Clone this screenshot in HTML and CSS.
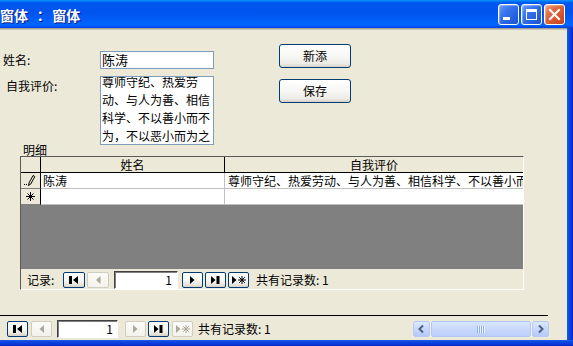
FILE: index.html
```html
<!DOCTYPE html>
<html lang="zh-CN">
<head>
<meta charset="utf-8">
<title>窗体 ： 窗体</title>
<link rel="stylesheet" href="styles.css">
</head>
<body>
<div class="window">
  <div class="titlebar">
    <span class="title">窗体 ： 窗体</span>
    <div class="tb-buttons">
      <span class="tb-btn"><svg width="19" height="19" viewBox="0 0 19 19"><rect x="4" y="12" width="7" height="3" fill="#fff"/></svg></span>
      <span class="tb-btn"><svg width="19" height="19" viewBox="0 0 19 19"><rect x="4.5" y="4.5" width="10" height="10" fill="none" stroke="#fff" stroke-width="1"/><rect x="4" y="4" width="11" height="3" fill="#fff"/></svg></span>
      <span class="tb-btn close"><svg width="19" height="19" viewBox="0 0 19 19"><path d="M5 5 L14 14 M14 5 L5 14" stroke="#fff" stroke-width="2" stroke-linecap="square"/></svg></span>
    </div>
  </div>
  <div class="frame">
    <div class="client">
      <div class="client-edge"></div>
      <div class="detail">
        <div class="top">
          <div class="fields">
            <div class="field-row">
              <span class="lbl lbl-name">姓名:</span>
              <div class="textbox">陈涛</div>
            </div>
            <div class="field-row row2">
              <span class="lbl lbl-eval">自我评价:</span>
              <div class="textarea"><div class="ta-text">尊师守纪、热爱劳动、与人为善、相信科学、不以善小而不为，不以恶小而为之</div></div>
            </div>
          </div>
          <div class="cmds">
            <button class="cmd">新添</button>
            <button class="cmd">保存</button>
          </div>
        </div>
        <div class="sub-label">明细</div>
        <div class="subform">
          <div class="dgrid">
            <div class="gh"></div>
            <div class="gh">姓名</div>
            <div class="gh last">自我评价</div>
            <div class="gsel"><svg width="19" height="15" viewBox="0 0 19 15"><rect x="3" y="11" width="1" height="1" fill="#000"/><rect x="5" y="11" width="1" height="1" fill="#000"/><path d="M7.5 12.5 L8 10 L12 2.5 L13.8 3.5 L9.8 11 Z" fill="none" stroke="#000" stroke-width="1"/></svg></div>
            <div class="gc">陈涛</div>
            <div class="gc last">尊师守纪、热爱劳动、与人为善、相信科学、不以善小而不为，不以恶小而为之</div>
            <div class="gsel"><svg width="19" height="15" viewBox="0 0 19 15"><path d="M9.5 3 V12 M5 7.5 H14 M6.5 4.5 L12.5 10.5 M12.5 4.5 L6.5 10.5" stroke="#000" stroke-width="1"/></svg></div>
            <div class="gc"></div>
            <div class="gc last"></div>
          </div>
          <div class="gray-area"></div>
          <div class="sub-nav">
            <span class="nav-label">记录:</span>
            <span class="nbtn w22"><svg width="20" height="14" viewBox="0 0 20 14"><rect x="5" y="3" width="3" height="8" fill="#000"/><path d="M14 3 L9 7 L14 11 Z" fill="#000"/></svg></span>
            <span class="nbtn w22 dis g2"><svg width="20" height="14" viewBox="0 0 20 14"><path d="M12.5 3 L8 7 L12.5 11 Z" fill="#ACA899"/></svg></span>
            <span class="navbox sub-box">1</span>
            <span class="nbtn g4"><svg width="19" height="14" viewBox="0 0 19 14"><path d="M7 3 L11.5 7 L7 11 Z" fill="#000"/></svg></span>
            <span class="nbtn g2"><svg width="19" height="14" viewBox="0 0 19 14"><path d="M5 3 L9.5 7 L5 11 Z" fill="#000"/><rect x="10.5" y="3" width="3" height="8" fill="#000"/></svg></span>
            <span class="nbtn g2"><svg width="19" height="14" viewBox="0 0 19 14"><path d="M3 3 L7.5 7 L3 11 Z" fill="#000"/><path d="M13 3 V11 M9 7 H17 M10.2 4.2 L15.8 9.8 M15.8 4.2 L10.2 9.8" stroke="#000" stroke-width="1"/></svg></span>
            <span class="nav-count sub-count">共有记录数: 1</span>
          </div>
        </div>
        <div class="detail-line"></div>
      </div>
      <div class="main-nav">
        <span class="nbtn"><svg width="19" height="14" viewBox="0 0 19 14"><rect x="5" y="3" width="3" height="8" fill="#000"/><path d="M14 3 L9 7 L14 11 Z" fill="#000"/></svg></span>
        <span class="nbtn dis g3"><svg width="19" height="14" viewBox="0 0 19 14"><path d="M12 3 L7.5 7 L12 11 Z" fill="#ACA899"/></svg></span>
        <span class="navbox main-box">1</span>
        <span class="nbtn dis g7"><svg width="19" height="14" viewBox="0 0 19 14"><path d="M7 3 L11.5 7 L7 11 Z" fill="#ACA899"/></svg></span>
        <span class="nbtn g2"><svg width="19" height="14" viewBox="0 0 19 14"><path d="M5 3 L9.5 7 L5 11 Z" fill="#000"/><rect x="10.5" y="3" width="3" height="8" fill="#000"/></svg></span>
        <span class="nbtn dis g3"><svg width="19" height="14" viewBox="0 0 19 14"><path d="M3 3 L7.5 7 L3 11 Z" fill="#ACA899"/><path d="M13 3 V11 M9 7 H17 M10.2 4.2 L15.8 9.8 M15.8 4.2 L10.2 9.8" stroke="#ACA899" stroke-width="1"/></svg></span>
        <span class="nav-count main-count">共有记录数: 1</span>
        <div class="hscroll">
          <span class="sb-btn"><svg width="15" height="14" viewBox="0 0 15 14"><path d="M9 3.5 L5.5 7 L9 10.5" fill="none" stroke="#4D6185" stroke-width="2"/></svg></span>
          <span class="sb-thumb"><svg width="9" height="7" viewBox="0 0 9 7"><path d="M0.5 0 V7 M2.5 0 V7 M4.5 0 V7 M6.5 0 V7" stroke="#8DAEF4" stroke-width="1"/><path d="M1.5 0 V7 M3.5 0 V7 M5.5 0 V7 M7.5 0 V7" stroke="#EEF4FF" stroke-width="1"/></svg></span>
          <span class="sb-btn"><svg width="15" height="14" viewBox="0 0 15 14"><path d="M6 3.5 L9.5 7 L6 10.5" fill="none" stroke="#4D6185" stroke-width="2"/></svg></span>
        </div>
      </div>
    </div>
    <div class="rborder"></div>
  </div>
  <div class="bborder"></div>
</div>
</body>
</html>
```

FILE: styles.css
```css
* {
  box-sizing: border-box;
  margin: 0;
  padding: 0;
}

html, body {
  width: 573px;
  height: 346px;
  overflow: hidden;
}

body {
  font-family: "Noto Sans CJK SC", "Noto Sans", sans-serif;
  font-size: 12px;
  color: #000;
  background: #ECE9D8;
}

.window {
  display: flex;
  flex-direction: column;
  width: 573px;
  height: 346px;
}

/* ---------- title bar ---------- */
.titlebar {
  height: 28px;
  flex: none;
  display: flex;
  align-items: center;
  justify-content: space-between;
  padding-right: 8px;
  background: linear-gradient(to bottom, #0997FF 0%, #0058EE 10%, #0053EE 45%, #0062F9 80%, #0066FF 88%, #005BFF 93%, #003DD7 100%);
  overflow: hidden;
}

.title {
  color: #fff;
  font-family: "Noto Sans CJK JP", "Noto Sans CJK SC", sans-serif;
  font-feature-settings: "locl" 0;
  font-weight: bold;
  font-size: 14px;
  line-height: 16px;
  margin-left: 0;
  margin-top: 1px;
  word-spacing: 2px;
  white-space: pre;
  text-shadow: 1px 1px 0 #0A1883;
}

.tb-buttons {
  display: flex;
  gap: 2px;
  margin-top: 1px;
}

.tb-btn {
  width: 21px;
  height: 21px;
  border: 1px solid #fff;
  border-radius: 3px;
  display: flex;
  background: linear-gradient(135deg, #6A9CF8 0%, #3874EC 35%, #2660E0 70%, #1C52D2 100%);
  box-shadow: inset 1px 1px 1px rgba(255, 255, 255, 0.35);
}

.tb-btn.close {
  background: linear-gradient(135deg, #EFA184 0%, #E06B42 35%, #D4522A 70%, #C5431C 100%);
}

/* ---------- frame ---------- */
.frame {
  flex: 1;
  display: flex;
  min-height: 0;
}

.client {
  width: 567px;
  display: flex;
  flex-direction: column;
}

.client-edge {
  height: 2px;
  background: #A6A39A;
  border-bottom: 1px solid #C9C6BA;
}

.rborder {
  width: 6px;
  background: linear-gradient(to right, #1D5CE6 0%, #0A47E2 35%, #0836D8 75%, #0526B8 100%);
}

.bborder {
  height: 6px;
  flex: none;
  background: linear-gradient(to bottom, #1D5CE6 0%, #0A45E0 35%, #0836D8 75%, #0526B8 100%);
}

/* ---------- detail ---------- */
.detail {
  display: flex;
  flex-direction: column;
}

.top {
  display: flex;
  padding-top: 14px;
  height: 115px;
}

.fields {
  margin-top: 7px;
  display: flex;
  flex-direction: column;
}

.field-row {
  display: flex;
  align-items: center;
}

.row2 {
  margin-top: 7px;
  align-items: flex-start;
}

.lbl {
  width: 100px;
  line-height: 18px;
}

.lbl-name {
  padding-left: 3px;
}

.lbl-eval {
  padding-left: 6px;
  margin-top: 1px;
}

.textbox {
  width: 114px;
  height: 18px;
  border: 1px solid #7F9DB9;
  background: #fff;
  font-size: 13px;
  line-height: 16px;
  padding-left: 1px;
}

.textarea {
  width: 114px;
  height: 69px;
  border: 1px solid #7F9DB9;
  background: #fff;
  padding-left: 1px;
  overflow: hidden;
}

.ta-text {
  font-size: 12px;
  line-height: 18px;
  margin-top: -4px;
}

.cmds {
  margin-left: 65px;
  display: flex;
  flex-direction: column;
  gap: 11px;
}

.cmd {
  width: 72px;
  height: 24px;
  border: 1px solid #003C74;
  border-radius: 3px;
  background: linear-gradient(to bottom, #FFFFFF 0%, #F7F7F4 50%, #ECEBE5 85%, #D6D0C5 100%);
  font-family: "Noto Sans CJK SC", "Noto Sans", sans-serif;
  font-size: 12px;
  line-height: 20px;
  color: #000;
  text-align: center;
}

.sub-label {
  line-height: 12px;
  height: 12px;
  margin-top: -1px;
  padding-left: 23px;
}

/* ---------- subform ---------- */
.subform {
  margin-left: 20px;
  width: 504px;
  height: 134px;
  border-style: solid;
  border-width: 1px;
  border-color: #5A5A5A #FFFFFF #FFFFFF #5A5A5A;
  display: flex;
  flex-direction: column;
  overflow: hidden;
}

.dgrid {
  display: grid;
  grid-template-columns: 20px 184px 1fr;
  grid-auto-rows: 16px;
}

.gh {
  background: #ECE9D8;
  border-right: 1px solid #000;
  border-bottom: 1px solid #000;
  text-align: center;
  line-height: 15px;
  white-space: nowrap;
  overflow: hidden;
}

.gsel {
  background: #ECE9D8;
  border-right: 1px solid #000;
  border-bottom: 1px solid #808080;
  display: flex;
  align-items: center;
}

.gc {
  background: #fff;
  border-right: 1px solid #C0C0C0;
  border-bottom: 1px solid #C0C0C0;
  line-height: 15px;
  padding-left: 2px;
  white-space: nowrap;
  overflow: hidden;
}

.gc.last,
.gh.last {
  border-right: none;
}

.gc.last {
  padding-left: 3px;
}

.gray-area {
  height: 64px;
  background: #808080;
}

.sub-nav {
  height: 20px;
  display: flex;
  align-items: flex-start;
  padding-top: 3px;
  padding-left: 6px;
  background: #ECE9D8;
}

.nav-label {
  width: 36px;
  line-height: 16px;
}

/* ---------- nav buttons ---------- */
.nbtn {
  width: 21px;
  height: 16px;
  flex: none;
  border: 1px solid #003C74;
  border-radius: 2px;
  background: linear-gradient(to bottom, #FFFFFF 0%, #F6F6F2 55%, #E6E3DA 85%, #D6D0C5 100%);
  display: flex;
  align-items: center;
  justify-content: center;
}

.nbtn.w22 {
  width: 22px;
}

.nbtn.dis {
  border-color: #CFCCC0;
  background: linear-gradient(to bottom, #FBFBF9 0%, #F3F2EC 100%);
}

.g2 { margin-left: 2px; }
.g3 { margin-left: 3px; }
.g4 { margin-left: 4px; }
.g7 { margin-left: 7px; }

.navbox {
  flex: none;
  height: 18px;
  margin-top: -1px;
  background: #fff;
  border-style: solid;
  border-width: 1px;
  border-color: #404040 #FFFFFF #FFFFFF #404040;
  box-shadow: inset 1px 1px 0 #808080;
  text-align: right;
  line-height: 16px;
}

.sub-box {
  width: 64px;
  margin-left: 5px;
  padding-right: 5px;
}

.main-box {
  width: 61px;
  margin-left: 5px;
  padding-right: 4px;
}

.nav-count {
  line-height: 16px;
  white-space: nowrap;
}

.sub-count {
  margin-left: 7px;
}

.main-count {
  margin-left: 5px;
}

/* ---------- bottom ---------- */
.detail-line {
  margin-top: 25px;
  width: 548px;
  height: 1px;
  background: #000;
}

.main-nav {
  height: 23px;
  display: flex;
  align-items: flex-start;
  padding-top: 5px;
  padding-left: 7px;
  padding-right: 18px;
}

.hscroll {
  margin-left: auto;
  width: 136px;
  height: 16px;
  display: flex;
  background: #F4F3EE;
}

.sb-btn {
  width: 17px;
  height: 16px;
  flex: none;
  border: 1px solid #B7CAF5;
  border-radius: 2px;
  background: linear-gradient(to bottom, #DDE7FE 0%, #C7D7FC 50%, #B5C9F8 100%);
  display: flex;
  align-items: center;
  justify-content: center;
}

.sb-thumb {
  flex: 1;
  margin: 0 1px;
  border: 1px solid #B2C6F4;
  border-radius: 2px;
  background: linear-gradient(to bottom, #D9E5FE 0%, #C9D9FC 50%, #BCCEFA 100%);
  display: flex;
  align-items: center;
  justify-content: center;
}
```
